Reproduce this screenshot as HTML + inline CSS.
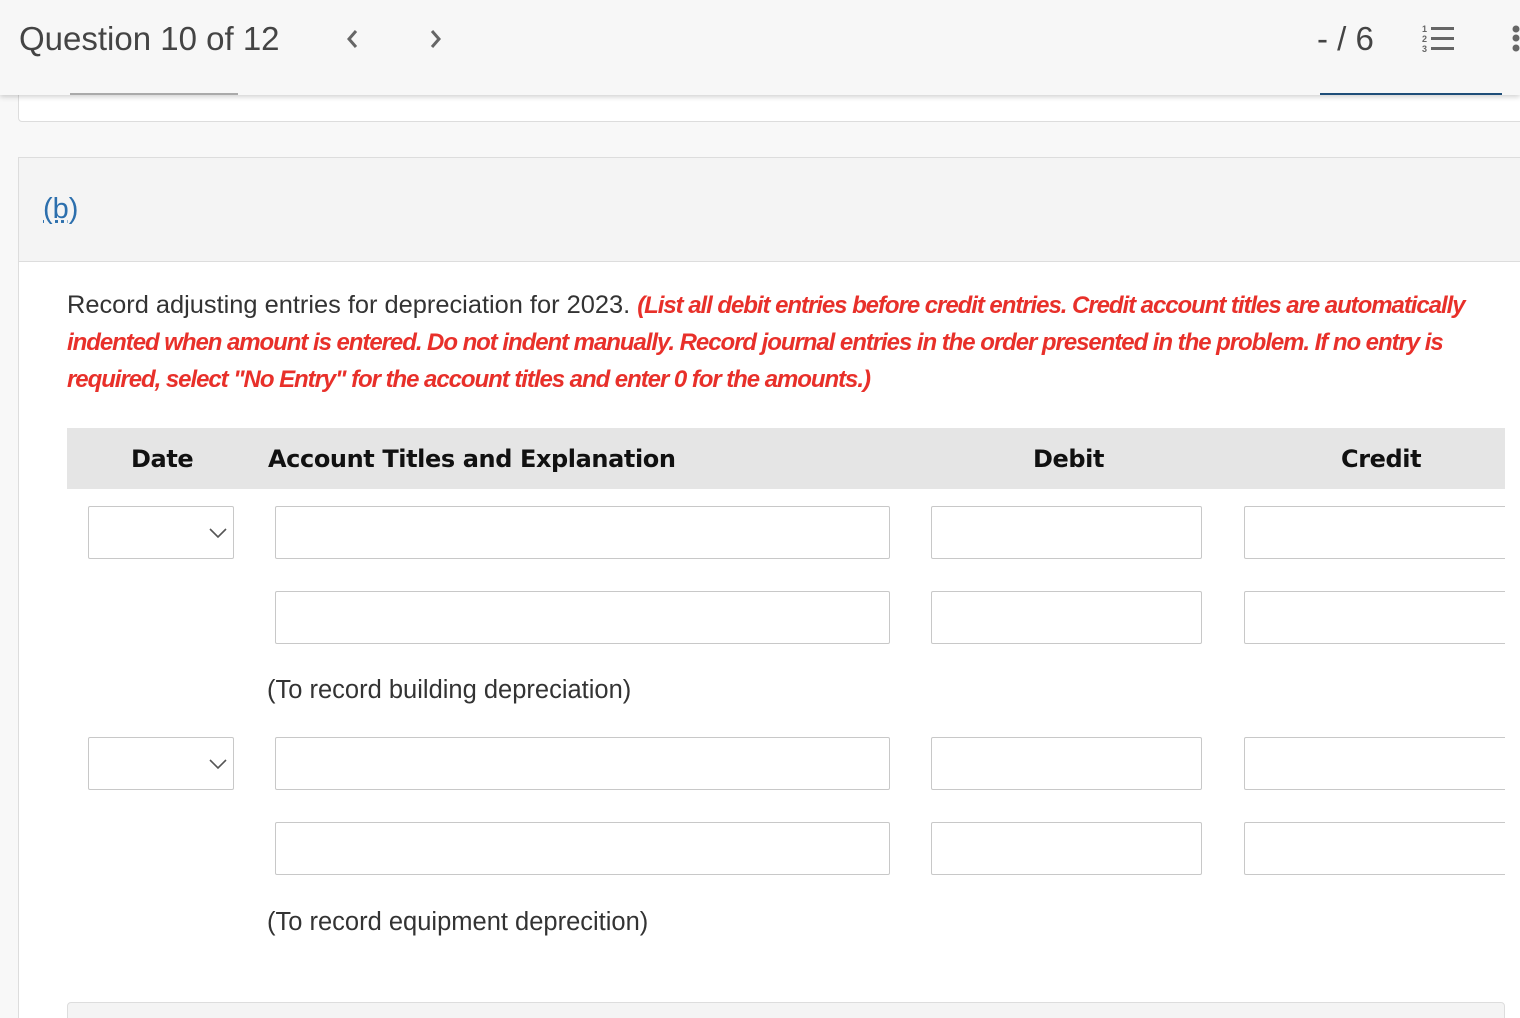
<!DOCTYPE html>
<html><head><style>
*{box-sizing:border-box;margin:0;padding:0}
html,body{width:1520px;height:1018px;overflow:hidden}
body{background:#f8f8f8;font-family:"Liberation Sans",sans-serif;position:relative}
.abs{position:absolute}
.hdr{left:0;top:0;width:1520px;height:95px;background:#f7f7f7;box-shadow:0 2px 5px rgba(0,0,0,.18);z-index:5}
.card1{left:18px;top:80px;width:1510px;height:42px;background:#fff;border:1px solid #ddd;border-radius:4px}
.sec{left:18px;top:157px;width:1510px;height:870px;background:#fff;border:1px solid #ddd}
.sech{left:18px;top:157px;width:1510px;height:105px;background:#f4f4f4;border:1px solid #ddd}
.inp{position:absolute;height:53px;border:1px solid #c8c8c8;border-radius:2px;background:#fff}
.th{position:absolute;top:445px;font-weight:bold;font-size:24px;color:#111;font-family:"DejaVu Sans","Liberation Sans",sans-serif;letter-spacing:-0.4px}
.lbl{position:absolute;left:267px;font-size:25.5px;color:#333}
.red{color:#e8302a;font-style:italic;font-weight:bold;letter-spacing:-1.05px;font-size:24px}
</style></head><body>
<div class="abs card1"></div>
<div class="abs sec"></div>
<div class="abs sech"></div>
<div class="abs hdr">
 <div class="abs" style="left:19px;top:20px;font-size:33px;color:#444">Question 10 of 12</div>
 <svg class="abs" style="left:344px;top:28px" width="16" height="22"><path d="M12 3L5 11l7 8" stroke="#666" stroke-width="3" fill="none"/></svg>
 <svg class="abs" style="left:428px;top:28px" width="16" height="22"><path d="M4 3l7 8-7 8" stroke="#666" stroke-width="3" fill="none"/></svg>
 <div class="abs" style="left:1317px;top:20px;font-size:33px;color:#444">- / 6</div>
 <svg class="abs" style="left:1422px;top:24px" width="34" height="30"><text x="0" y="8" font-size="9" font-weight="bold" fill="#666" font-family="Liberation Sans">1</text><text x="0" y="18" font-size="9" font-weight="bold" fill="#666" font-family="Liberation Sans">2</text><text x="0" y="28" font-size="9" font-weight="bold" fill="#666" font-family="Liberation Sans">3</text><rect x="9" y="3" width="23" height="3" fill="#666"/><rect x="9" y="13" width="23" height="3" fill="#666"/><rect x="9" y="23" width="23" height="3" fill="#666"/></svg>
 <svg class="abs" style="left:1510px;top:24px" width="10" height="30"><circle cx="6" cy="5" r="3.5" fill="#666"/><circle cx="6" cy="14" r="3.5" fill="#666"/><circle cx="6" cy="24" r="3.5" fill="#666"/></svg>
 <div class="abs" style="left:70px;top:93px;width:168px;height:2px;background:#aaa"></div>
 <div class="abs" style="left:1320px;top:93px;width:182px;height:2px;background:#1f4e79"></div>
</div>
<div class="abs" style="left:43px;top:193px;font-size:29px;color:#2c6fad;text-decoration:underline dotted">(b)</div>
<div class="abs" style="left:67px;top:287px;width:1460px;line-height:36px;font-size:25.4px;color:#333">Record adjusting entries for depreciation for 2023. <span class="red">(List all debit entries before credit entries. Credit account titles are automatically<br>indented when amount is entered. Do not indent manually. Record journal entries in the order presented in the problem. If no entry is<br>required, select "No Entry" for the account titles and enter 0 for the amounts.)</span></div>
<div class="abs" style="left:67px;top:428px;width:1438px;height:61px;background:#e5e5e5"></div>
<div class="th" style="left:131px">Date</div>
<div class="th" style="left:268px">Account Titles and Explanation</div>
<div class="th" style="left:1033px">Debit</div>
<div class="th" style="left:1341px">Credit</div>

<div class="inp" style="left:88px;top:506px;width:146px"><svg class="abs" style="left:120px;top:20px" width="18" height="12"><path d="M1 2l8 8 8-8" stroke="#555" stroke-width="1.6" fill="none"/></svg></div>
<div class="inp" style="left:275px;top:506px;width:615px"></div>
<div class="inp" style="left:931px;top:506px;width:271px"></div>
<div class="inp" style="left:1244px;top:506px;width:280px"></div>
<div class="inp" style="left:275px;top:591px;width:615px"></div>
<div class="inp" style="left:931px;top:591px;width:271px"></div>
<div class="inp" style="left:1244px;top:591px;width:280px"></div>
<div class="lbl" style="top:676px">(To record building depreciation)</div>

<div class="inp" style="left:88px;top:737px;width:146px"><svg class="abs" style="left:120px;top:20px" width="18" height="12"><path d="M1 2l8 8 8-8" stroke="#555" stroke-width="1.6" fill="none"/></svg></div>
<div class="inp" style="left:275px;top:737px;width:615px"></div>
<div class="inp" style="left:931px;top:737px;width:271px"></div>
<div class="inp" style="left:1244px;top:737px;width:280px"></div>
<div class="inp" style="left:275px;top:822px;width:615px"></div>
<div class="inp" style="left:931px;top:822px;width:271px"></div>
<div class="inp" style="left:1244px;top:822px;width:280px"></div>
<div class="lbl" style="top:908px">(To record equipment deprecition)</div>
<div class="abs" style="left:67px;top:1002px;width:1438px;height:40px;background:#f4f4f4;border:1px solid #ddd;border-radius:4px"></div>
<div class="abs" style="left:1505px;top:489px;width:15px;height:520px;background:#fff"></div>
</body></html>
